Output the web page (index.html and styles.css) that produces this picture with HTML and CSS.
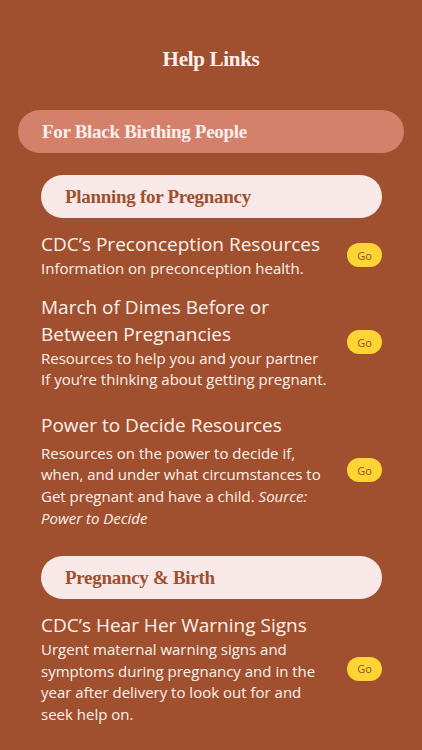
FILE: index.html
```html
<!DOCTYPE html>
<html lang="en">
<head>
<meta charset="utf-8">
<title>Help Links</title>
<link rel="stylesheet" href="styles.css">
</head>
<body>
<main class="page">
  <h1 class="page-title">Help Links</h1>
  <div class="group-pill">For Black Birthing People</div>

  <section class="section">
    <div class="section-pill">Planning for Pregnancy</div>
    <div class="item item-first">
      <div class="item-text">
        <h2 class="item-title">CDC’s Preconception Resources</h2>
        <p class="item-desc">Information on preconception health.</p>
      </div>
      <button class="go">Go</button>
    </div>
    <div class="item">
      <div class="item-text">
        <h2 class="item-title">March of Dimes Before or<br>Between Pregnancies</h2>
        <p class="item-desc">Resources to help you and your partner<br>If you’re thinking about getting pregnant.</p>
      </div>
      <button class="go">Go</button>
    </div>
    <div class="item item-spaced">
      <div class="item-text">
        <h2 class="item-title">Power to Decide Resources</h2>
        <p class="item-desc item-desc-spaced">Resources on the power to decide if,<br>when, and under what circumstances to<br>Get pregnant and have a child. <em>Source:<br>Power to Decide</em></p>
      </div>
      <button class="go">Go</button>
    </div>
  </section>

  <section class="section section-second">
    <div class="section-pill">Pregnancy &amp; Birth</div>
    <div class="item item-first">
      <div class="item-text">
        <h2 class="item-title">CDC’s Hear Her Warning Signs</h2>
        <p class="item-desc">Urgent maternal warning signs and<br>symptoms during pregnancy and in the<br>year after delivery to look out for and<br>seek help on.</p>
      </div>
      <button class="go">Go</button>
    </div>
  </section>
</main>
</body>
</html>
```
FILE: styles.css
```css
* { box-sizing: border-box; }
html, body {
  margin: 0;
  padding: 0;
  background: #a0502f;
}
body {
  font-family: "Open Sans", "Noto Sans", sans-serif;
  color: #fbeeea;
  overflow: hidden;
}
.page {
  padding: 45px 18px 0 18px;
  display: flex;
  flex-direction: column;
}
.page-title {
  margin: 0;
  text-align: center;
  font-family: "Liberation Serif", "DejaVu Serif", serif;
  font-weight: bold;
  font-size: 21px;
  line-height: 28px;
  color: #fcefec;
  letter-spacing: -0.3px;
}
.group-pill {
  margin-top: 37px;
  height: 43px;
  border-radius: 22px;
  background: #d4806a;
  color: #fcefec;
  font-family: "Liberation Serif", "DejaVu Serif", serif;
  font-weight: bold;
  font-size: 19px;
  display: flex;
  align-items: center;
  padding-left: 24px;
  letter-spacing: -0.3px;
}
.section {
  margin: 22px 22px 0 23px;
  display: flex;
  flex-direction: column;
}
.section-second {
  margin-top: 27px;
}
.section-pill {
  height: 43px;
  border-radius: 22px;
  background: #f9e8e8;
  color: #a0502f;
  font-family: "Liberation Serif", "DejaVu Serif", serif;
  font-weight: bold;
  font-size: 19px;
  display: flex;
  align-items: center;
  padding-left: 24px;
  letter-spacing: -0.3px;
}
.item {
  display: flex;
  align-items: center;
  gap: 8px;
  margin-top: 14px;
}
.item-first {
  margin-top: 13px;
}
.item-spaced {
  margin-top: 21px;
}
.item-text {
  flex: 1;
  min-width: 0;
}
.item-title {
  margin: 0;
  font-weight: 400;
  font-size: 19px;
  line-height: 27px;
  color: #fcf0ec;
}
.item-desc {
  margin: 0;
  font-size: 15px;
  line-height: 21.6px;
  color: #fcf0ec;
}
.item-desc-spaced {
  margin-top: 4px;
}
.item-desc em {
  font-style: italic;
}
.go {
  flex: none;
  width: 35px;
  height: 24px;
  border: none;
  border-radius: 12px;
  background: #fdd433;
  color: #8f4f2c;
  font-family: "Open Sans", sans-serif;
  font-size: 11px;
  padding: 0;
  cursor: pointer;
}
```
